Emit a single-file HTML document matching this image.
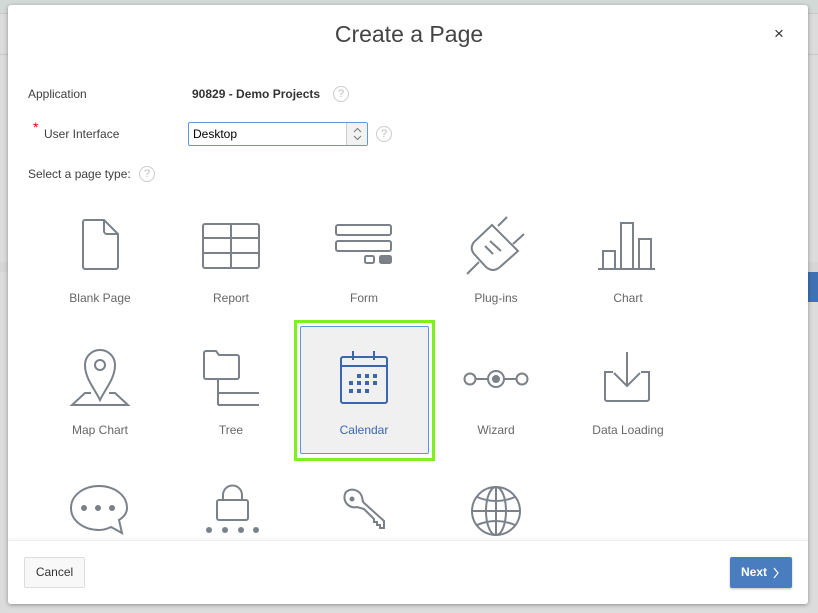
<!DOCTYPE html>
<html><head><meta charset="utf-8">
<style>
*{margin:0;padding:0;box-sizing:border-box}
body{width:818px;height:613px;overflow:hidden;background:#dcdcdc;font-family:"Liberation Sans",Arial,sans-serif;position:relative}
.bgtop{position:absolute;left:0;top:0;width:818px;height:13px;background:#d3d9d6}
.bgline{position:absolute;left:0;width:818px;height:1px;background:#c8c8c8}
.dlg{position:absolute;left:8px;top:5px;width:800px;height:599px;background:#fff;border-radius:3px;box-shadow:0 1px 4px rgba(0,0,0,.35);overflow:hidden}
.wrap{position:absolute;left:-8px;top:-5px;width:818px;height:613px}
.title{position:absolute;left:0;width:818px;top:21px;text-align:center;font-size:23px;color:#444}
.close{position:absolute;left:774px;top:24px;font-size:17px;color:#333}
.lbl{position:absolute;font-size:12px;color:#404040}
.help{position:absolute;width:16px;height:16px;border:1px solid #ccc;border-radius:50%;font-size:11px;color:#bbb;text-align:center;line-height:14px}
.sel{position:absolute;left:188px;top:122px;width:180px;height:24px;border:1px solid #5c9ae0;border-radius:2px;font-size:12px;color:#000;padding:4px 4px}
.sel .arr{position:absolute;right:0;top:0;width:21px;height:22px;background:#f2f2f2;border-left:1px solid #ccc}
.t{position:absolute;width:132px;text-align:center;font-size:12px;color:#666}
.foot{position:absolute;left:0;top:535px;width:800px;height:64px;background:#fff;border-top:1px solid #eee;box-shadow:0 -2px 3px rgba(0,0,0,.04)}
.btn{position:absolute;font-size:12px;border-radius:2px}
</style></head><body>
<div class="bgtop"></div>
<div class="bgline" style="top:13px"></div>
<div class="bgline" style="top:54px"></div>
<div style="position:absolute;left:0;top:262px;width:818px;height:10px;background:#d6d6d6"></div>
<div style="position:absolute;left:806px;top:272px;width:12px;height:30px;background:#3f72b5"></div>
<div class="dlg">
<div class="wrap">
<div class="title">Create a Page</div>
<div class="close">×</div>
<div class="lbl" style="left:28px;top:87px">Application</div>
<div class="lbl" style="left:192px;top:87px;font-weight:bold;color:#333">90829 - Demo Projects</div>
<div class="help" style="left:333px;top:86px">?</div>
<div class="lbl" style="left:33px;top:119px;color:#e00;font-size:14px">*</div>
<div class="lbl" style="left:44px;top:127px">User Interface</div>
<div class="sel">Desktop<div class="arr"><svg width="21" height="22"><path d="M7 9l3.5-3.5 3.5 3.5M7 13l3.5 3.5 3.5-3.5" fill="none" stroke="#777" stroke-width="1"/></svg></div></div>
<div class="help" style="left:376px;top:126px">?</div>
<div class="lbl" style="left:28px;top:167px">Select a page type:</div>
<div class="help" style="left:139px;top:166px">?</div>

<div style="position:absolute;left:294px;top:320px;width:141px;height:141px;border:3px solid #7ef01c"></div>
<div style="position:absolute;left:300px;top:326px;width:129px;height:128px;border:1px solid #5b95e0;background:#f0f0f0;border-radius:2px"></div>

<svg width="818" height="613" style="position:absolute;left:0;top:0" fill="none" stroke="#7a8189" stroke-width="2">
<!-- blank page -->
<path d="M85 220h19l14 14v33a2 2 0 0 1-2 2H85a2 2 0 0 1-2-2V222a2 2 0 0 1 2-2zM104 220v11a3 3 0 0 0 3 3h11"/>
<!-- report -->
<rect x="203" y="224" width="56" height="44" rx="2"/><path d="M203 238h56M203 253h56M231 224v44"/>
<!-- form -->
<rect x="336" y="225" width="55" height="10" rx="2"/><rect x="336" y="241" width="55" height="10" rx="2"/>
<rect x="365" y="256" width="9" height="7" rx="1.5"/><rect x="380" y="256" width="11" height="7" rx="1.5" fill="#7a8189"/>
<!-- plug -->
<path d="M507 217L498 226M524 234L513 244M479 262L467 274"/>
<path d="M492 225L518 251L500 267Q493 273 486 267L475 255Q469 249 474 242Z"/>
<path d="M485 246L493 254M490 241L501 251"/>
<!-- chart -->
<path d="M598 269h57"/><rect x="603" y="251" width="12" height="18"/><rect x="621" y="223" width="12" height="46"/><rect x="639" y="239" width="12" height="30"/>
<!-- map -->
<path d="M100 400C94 388 85 378 85 365a15 15 0 0 1 30 0c0 13-9 23-15 35z"/><circle cx="100" cy="365" r="5"/>
<path d="M91 393H85L72 405h56L115 393h-6"/>
<!-- tree -->
<path d="M206 351h10l3 4h18a2 2 0 0 1 2 2v20a2 2 0 0 1-2 2H206a2 2 0 0 1-2-2V353a2 2 0 0 1 2-2zM218 379v26M218 393h41M218 405h41"/>
<!-- calendar -->
<g stroke="#3a66b0"><rect x="341" y="357" width="46" height="46" rx="2"/><path d="M341 366h46M353 351v9M374 351v9"/></g>
<g fill="#3a66b0" stroke="none"><rect x="357" y="374" width="4" height="4"/><rect x="365" y="374" width="4" height="4"/><rect x="373" y="374" width="4" height="4"/><rect x="349" y="381" width="4" height="4"/><rect x="357" y="381" width="4" height="4"/><rect x="365" y="381" width="4" height="4"/><rect x="373" y="381" width="4" height="4"/><rect x="349" y="389" width="4" height="4"/><rect x="357" y="389" width="4" height="4"/><rect x="365" y="389" width="4" height="4"/></g>
<!-- wizard -->
<circle cx="470" cy="379" r="5.5"/><circle cx="496" cy="379" r="8"/><circle cx="496" cy="379" r="4" fill="#7a8189" stroke="none"/><circle cx="522" cy="379" r="5.5"/><path d="M475.5 379h12.5M504 379h12.5"/>
<!-- data loading -->
<path d="M627 352v33M614 373l13 13 13-13M613 372h-8v27a2 2 0 0 0 2 2h40a2 2 0 0 0 2-2v-27h-8"/>
<!-- chat -->
<path d="M119 520l3 13-11-6Q105 530 99 530C84 530 71 521 71 508S84 486 99 486s28 9 28 22q0 7-8 12z"/>
<g fill="#7a8189" stroke="none"><circle cx="84" cy="508" r="3"/><circle cx="98" cy="508" r="3"/><circle cx="112" cy="508" r="3"/></g>
<!-- lock -->
<rect x="217" y="500" width="31" height="20" rx="2"/><path d="M223 500v-5a9.5 9.5 0 0 1 19 0v5"/>
<g fill="#7a8189" stroke="none"><circle cx="209" cy="530" r="3"/><circle cx="225" cy="530" r="3"/><circle cx="241" cy="530" r="3"/><circle cx="256" cy="530" r="3"/></g>
<!-- key -->
<path d="M346 492a10 10 0 0 1 16 5l1 5 21 19v7h-4v-3h-3v-3h-3v-3l-10-10-7-2a10 10 0 0 1-11-15z"/><circle cx="352" cy="499" r="2.5" fill="#7a8189" stroke="none"/>
<!-- globe -->
<circle cx="496" cy="511" r="24"/><ellipse cx="496" cy="511" rx="10" ry="24"/><path d="M472 511h48M496 487v48M477 497q19 8 38 0M477 525q19-8 38 0"/>
</svg>

<div class="t" style="left:34px;top:291px">Blank Page</div>
<div class="t" style="left:165px;top:291px">Report</div>
<div class="t" style="left:298px;top:291px">Form</div>
<div class="t" style="left:430px;top:291px">Plug-ins</div>
<div class="t" style="left:562px;top:291px">Chart</div>
<div class="t" style="left:34px;top:423px">Map Chart</div>
<div class="t" style="left:165px;top:423px">Tree</div>
<div class="t" style="left:298px;top:423px;color:#3c65b0">Calendar</div>
<div class="t" style="left:430px;top:423px">Wizard</div>
<div class="t" style="left:562px;top:423px">Data Loading</div>
</div>

<div class="foot">
<div class="btn" style="left:16px;top:16px;width:61px;height:31px;border:1px solid #ddd;background:#f8f8f8;color:#333;text-align:center;line-height:29px">Cancel</div>
<div class="btn" style="left:722px;top:16px;width:62px;height:31px;background:#4a7dbf;color:#fff;font-weight:bold;line-height:31px;box-shadow:0 1px 2px rgba(0,0,0,.25);padding-left:11px">Next<svg width="8" height="12" style="position:absolute;left:42px;top:10px"><path d="M2 1l4 5-4 5" fill="none" stroke="#fff" stroke-width="1.2"/></svg></div>
</div>
</div>
</body></html>
